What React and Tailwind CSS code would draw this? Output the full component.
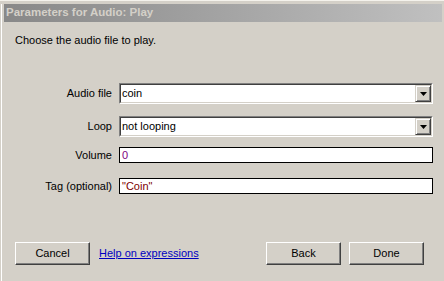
import React from "react";

const Combo = ({ value }) => (
  <div className="w-[314px] h-[21px] border border-t-[#808080] border-l-[#808080] border-b-white border-r-white">
    <div className="h-full flex border border-t-[#404040] border-l-[#404040] border-b-[#d4d0c8] border-r-[#d4d0c8] bg-white">
      <span className="flex-1 pl-px leading-[17px]">{value}</span>
      <div className="w-[16px] h-full flex items-center justify-center bg-[#d4d0c8] border border-t-[#d4d0c8] border-l-[#d4d0c8] border-b-[#404040] border-r-[#404040] shadow-[inset_1px_1px_#fff,inset_-1px_-1px_#808080]">
        <svg width="7" height="4" viewBox="0 0 7 4">
          <path d="M0 0h7L3.5 4z" fill="#000" />
        </svg>
      </div>
    </div>
  </div>
);

const TextBox = ({ value, color }) => (
  <div className={`w-[314px] h-[16px] border border-black bg-white pl-[2px] leading-[14px] ${color}`}>
    {value}
  </div>
);

const Row = ({ label, className, children }) => (
  <div className={`flex items-center ${className}`}>
    <div className="w-[98px] shrink-0 text-right pr-px">{label}</div>
    <div className="ml-[6px] shrink-0">{children}</div>
  </div>
);

const Btn = ({ children }) => (
  <button className="w-[75px] h-[23px] bg-[#d4d0c8] border border-t-white border-l-white border-b-[#404040] border-r-[#404040] shadow-[inset_-1px_-1px_#808080] text-[11px] leading-none">
    {children}
  </button>
);

export default function App() {
  return (
    <div className="w-[444px] h-[281px] overflow-hidden bg-[#d4d0c8] border-t border-[#f4f2ec] pl-px font-['Liberation_Sans',Arial,sans-serif] text-[11px] text-black">
      <div className="h-full border-l border-white">
        <div className="mt-[3px] mx-[2px] h-[18px] bg-linear-to-r from-[#888888] to-[#c0c0c0] flex items-center pl-[2px]">
          <span className="font-bold text-[#d4d0c8] text-[11.5px]">Parameters for Audio: Play</span>
        </div>
        <div className="pl-[13px]">
          <p className="mt-[12px] leading-[13px]">Choose the audio file to play.</p>
          <Row label="Audio file" className="mt-[36px]">
            <Combo value="coin" />
          </Row>
          <Row label="Loop" className="mt-[12px]">
            <Combo value="not looping" />
          </Row>
          <Row label="Volume" className="mt-[10px]">
            <TextBox value="0" color="text-[#800080]" />
          </Row>
          <Row label="Tag (optional)" className="mt-[14px]">
            <TextBox value={'"Coin"'} color="text-[#800000]" />
          </Row>
          <div className="mt-[48px] pr-[20px] flex items-center">
            <Btn>Cancel</Btn>
            <a href="#" className="ml-[9px] text-[#0000c0] underline">
              Help on expressions
            </a>
            <div className="ml-auto flex gap-[8px]">
              <Btn>Back</Btn>
              <Btn>Done</Btn>
            </div>
          </div>
        </div>
      </div>
    </div>
  );
}
